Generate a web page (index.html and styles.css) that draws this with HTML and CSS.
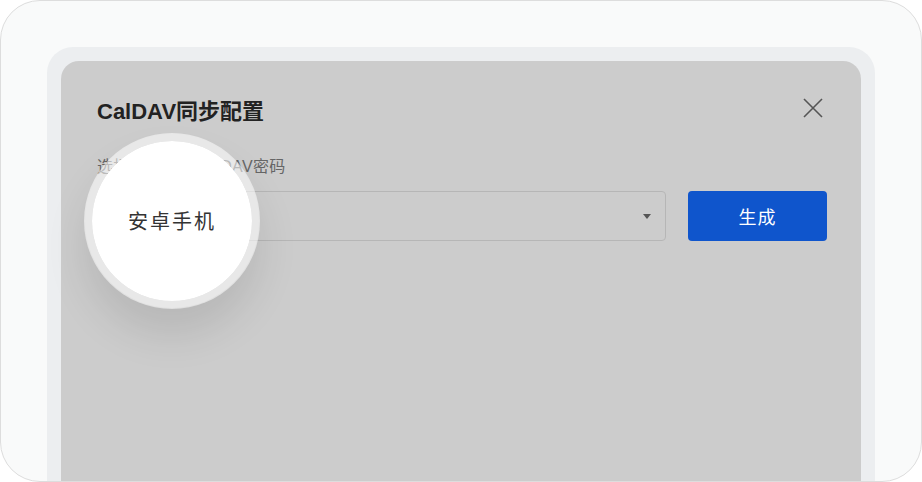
FILE: index.html
```html
<!DOCTYPE html>
<html lang="zh-CN">
<head>
    <meta charset="UTF-8">
    <meta name="viewport" content="width=device-width, initial-scale=1.0">
    <title>CalDAV同步配置</title>
    <link rel="stylesheet" href="styles.css">
</head>
<body>
    <!-- Device frame -->
    <div class="device">
        <div class="screen">
            <div class="dialog">
                <div class="dialog-header">
                    <h1 class="dialog-title">CalDAV同步配置</h1>
                    <button class="close-btn" aria-label="关闭">
                        <svg width="20" height="20" viewBox="0 0 20 20">
                            <path d="M1 1 L19 19 M19 1 L1 19" stroke="#555" stroke-width="1.6" fill="none"/>
                        </svg>
                    </button>
                </div>

                <p class="field-label">选择设备生成CalDAV密码</p>

                <div class="form-row">
                    <div class="select-box">
                        <span class="select-arrow"></span>
                    </div>
                    <button class="generate-btn">生成</button>
                </div>

                <!-- Magnifier lens over the select -->
                <div class="lens">
                    <span class="lens-text">安卓手机</span>
                </div>
            </div>
        </div>
    </div>
</body>
</html>
```

FILE: styles.css
```css
* {
    margin: 0;
    padding: 0;
    box-sizing: border-box;
}

body {
    font-family: 'Liberation Sans', 'Noto Sans CJK SC', sans-serif;
    background: #ffffff;
    width: 922px;
    height: 482px;
    overflow: hidden;
}

/* Outer frame */
.device {
    width: 922px;
    height: 482px;
    border: 1px solid #dddddd;
    border-radius: 40px;
    background: #f9fafa;
    overflow: hidden;
    padding: 46px 46px 0;
}

.screen {
    height: 100%;
    background: #eceef0;
    border-radius: 26px 26px 0 0;
    padding: 14px 14px 0;
}

/* Dialog */
.dialog {
    position: relative;
    height: 100%;
    background: #cccccc;
    border-radius: 18px 18px 0 0;
    padding: 36px 34px 0 36px;
}

.dialog-header {
    display: flex;
    justify-content: space-between;
    align-items: flex-start;
}

.dialog-title {
    font-size: 22px;
    font-weight: 700;
    line-height: 30px;
    color: #222222;
}

.close-btn {
    background: none;
    border: none;
    width: 20px;
    height: 20px;
    margin-top: 1px;
    margin-right: 4px;
    display: flex;
}

.field-label {
    margin-top: 28px;
    font-size: 16px;
    line-height: 24px;
    letter-spacing: 0.35px;
    color: #666666;
}

.form-row {
    display: flex;
    gap: 22px;
    margin-top: 12px;
}

.select-box {
    flex: 1;
    height: 50px;
    border: 1px solid #b6b6b6;
    border-radius: 4px;
    display: flex;
    align-items: center;
    justify-content: flex-end;
    padding-right: 14px;
}

.select-arrow {
    width: 0;
    height: 0;
    border-left: 4px solid transparent;
    border-right: 4px solid transparent;
    border-top: 5px solid #555555;
}

.generate-btn {
    width: 139px;
    height: 50px;
    background: #0f55cc;
    color: #ffffff;
    border: none;
    border-radius: 4px;
    font-family: inherit;
    font-size: 18px;
    letter-spacing: 1px;
}

/* Magnifier */
.lens {
    position: absolute;
    left: 23px;
    top: 72px;
    width: 176px;
    height: 176px;
    border-radius: 50%;
    background: #ffffff;
    background-clip: padding-box;
    border: 8px solid rgba(255, 255, 255, 0.55);
    box-shadow: 0 26px 40px rgba(0, 0, 0, 0.1);
    display: flex;
    align-items: center;
    justify-content: center;
}

.lens-text {
    font-size: 20px;
    letter-spacing: 2px;
    color: #333333;
    margin-top: -2px;
}
```
